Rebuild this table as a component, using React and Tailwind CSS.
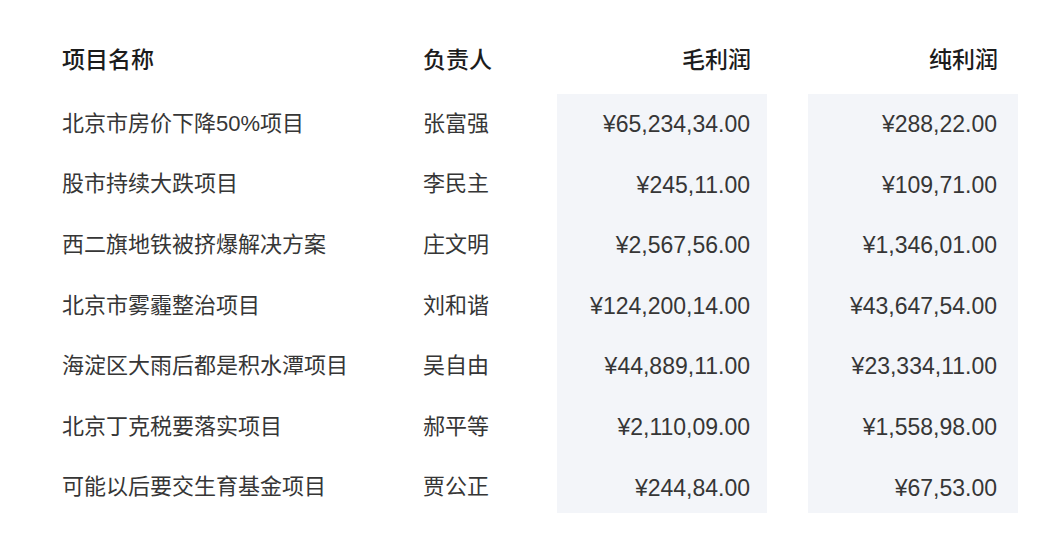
import React from "react";

const rows = [
  { name: "北京市房价下降50%项目", owner: "张富强", gross: "¥65,234,34.00", net: "¥288,22.00" },
  { name: "股市持续大跌项目", owner: "李民主", gross: "¥245,11.00", net: "¥109,71.00" },
  { name: "西二旗地铁被挤爆解决方案", owner: "庄文明", gross: "¥2,567,56.00", net: "¥1,346,01.00" },
  { name: "北京市雾霾整治项目", owner: "刘和谐", gross: "¥124,200,14.00", net: "¥43,647,54.00" },
  { name: "海淀区大雨后都是积水潭项目", owner: "吴自由", gross: "¥44,889,11.00", net: "¥23,334,11.00" },
  { name: "北京丁克税要落实项目", owner: "郝平等", gross: "¥2,110,09.00", net: "¥1,558,98.00" },
  { name: "可能以后要交生育基金项目", owner: "贾公正", gross: "¥244,84.00", net: "¥67,53.00" },
];

const font = { fontFamily: '"Liberation Sans", "Noto Sans CJK SC", sans-serif' };

function Header({ children, right }) {
  return (
    <div
      className={`h-[60px] flex items-center text-[23px] font-medium text-[#1c1c1c] ${right ? "justify-end pr-[16px]" : ""}`}
    >
      {children}
    </div>
  );
}

function Cell({ children, right, num }) {
  return (
    <div
      className={`h-[60.6px] flex items-center text-[#363636] ${num ? "text-[23px]" : "text-[22px]"} ${right ? "justify-end pr-[17px]" : ""}`}
    >
      {children}
    </div>
  );
}

export default function App() {
  return (
    <div className="w-[1060px] h-[550px] bg-white pt-[30px] pl-[62px]" style={font}>
      <div className="flex">
        <div className="w-[361px]">
          <Header>项目名称</Header>
          <div className="mt-[3px]">
            {rows.map((r) => (
              <Cell key={r.name}>{r.name}</Cell>
            ))}
          </div>
        </div>
        <div className="w-[134px]">
          <Header>负责人</Header>
          <div className="mt-[3px]">
            {rows.map((r) => (
              <Cell key={r.owner}>{r.owner}</Cell>
            ))}
          </div>
        </div>
        <div className="w-[210px]">
          <Header right>毛利润</Header>
          <div className="mt-[4px] h-[419px] bg-[#f3f5f9]">
            {rows.map((r) => (
              <Cell key={r.gross} right num>{r.gross}</Cell>
            ))}
          </div>
        </div>
        <div className="w-[210px] ml-[41px]">
          <Header right>
            <span className="pr-[4px]">纯利润</span>
          </Header>
          <div className="mt-[4px] h-[419px] bg-[#f3f5f9]">
            {rows.map((r) => (
              <Cell key={r.net} right num>
                <span className="pr-[4px]">{r.net}</span>
              </Cell>
            ))}
          </div>
        </div>
      </div>
    </div>
  );
}
